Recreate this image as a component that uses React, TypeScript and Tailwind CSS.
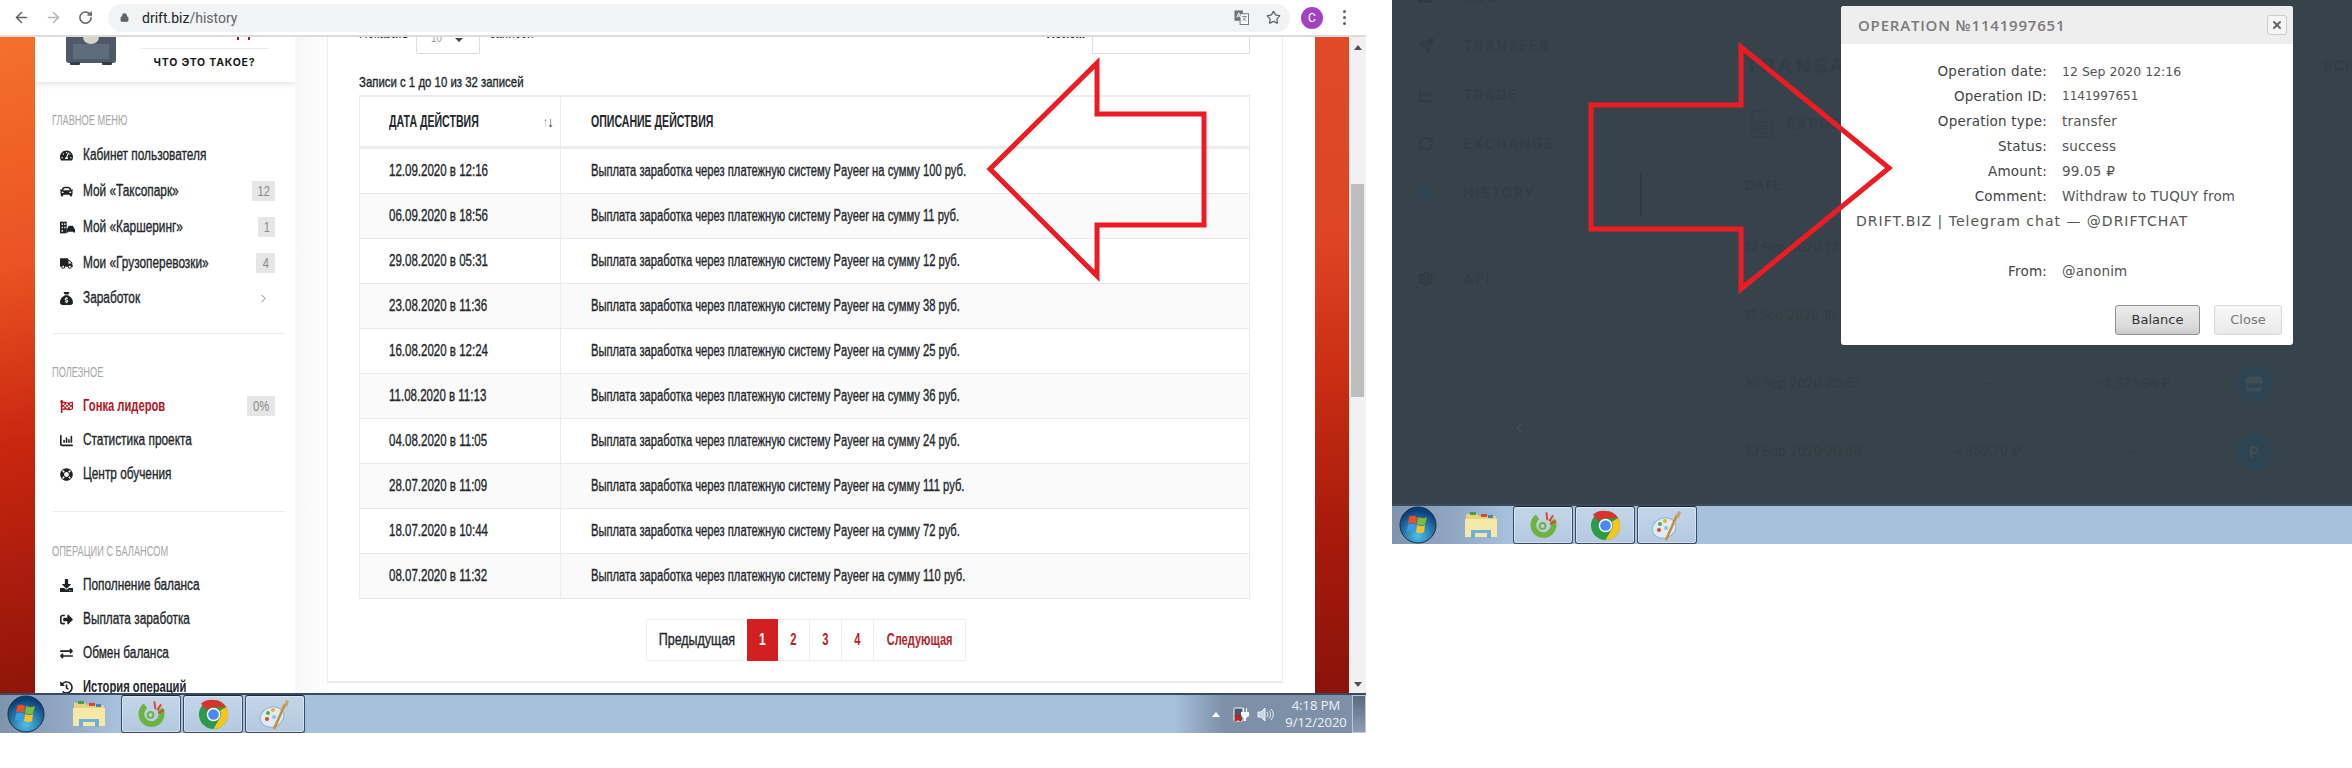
import React from "react";
import {
  ArrowLeft, ArrowRight, RotateCw, Lock, Star, ChevronRight, ChevronLeft,
  Send, LineChart, RefreshCw, Settings, X,
} from "lucide-react";
import { FaTachometerAlt, FaCar, FaTruck, FaFlagCheckered, FaLifeRing, FaDownload, FaSignOutAlt, FaExchangeAlt, FaHistory, FaClock, FaStore } from "react-icons/fa";
import { FaSackDollar, FaChartColumn } from "react-icons/fa6";

const ACT = [
  ["12.09.2020 в 12:16", "100"], ["06.09.2020 в 18:56", "11"], ["29.08.2020 в 05:31", "12"],
  ["23.08.2020 в 11:36", "38"], ["16.08.2020 в 12:24", "25"], ["11.08.2020 в 11:13", "36"],
  ["04.08.2020 в 11:05", "24"], ["28.07.2020 в 11:09", "111"], ["18.07.2020 в 10:44", "72"],
  ["08.07.2020 в 11:32", "110"],
];

const narrow = "font-['Liberation_Sans',sans-serif]";

/* Condensed text: the reference's face is narrower than any installed family. */
function N({ children, className = "" }: { children: React.ReactNode; className?: string }) {
  return <span className={`inline-block whitespace-nowrap leading-none ${className}`}>{children}</span>;
}
const thick = "[-webkit-text-stroke:0.35px_#23272b]";

function CarSharing() {
  return (
    <svg viewBox="0 0 18 14" className="w-[15px] h-[13px]" fill="#1f2328">
      <path d="M0 0h8v14H0z" />
      <path d="M2 2h1.500v2H2zM5 2h1.500v2H5zM2 6h1.500v2H2zM5 6h1.500v2H5zM2 10h1.500v2H2z" fill="#fff" />
      <path d="M9 8l1.500-3h5L17 8l1 1v4h-2v-1h-6v1H8V9z" />
    </svg>
  );
}

function MenuItem({ icon, label, badge, badgeW, bold, red, tall, chevron }: { icon: React.ReactNode; label: string; badge?: string; badgeW?: string; bold?: boolean; red?: boolean; tall?: boolean; chevron?: boolean }) {
  return (
    <div className={`flex items-center pl-[25px] pr-[20px] ${tall ? "h-[36px]" : "h-[34px]"}`}>
      <span className="w-[23px] shrink-0 flex justify-start text-[#1f2328] text-[13px]">{icon}</span>
      <N className={`${narrow} text-[16px] origin-left ${bold ? "font-bold scale-x-[0.7]" : `scale-x-[0.74] ${thick}`} ${red ? "text-[#b5161c]" : "text-[#23272b]"}`}>{label}</N>
      {badge && (
        <span className={`ml-auto h-[20px] ${badgeW} bg-[#e6e6e6] text-[#8a8a8a] flex items-center justify-center ${narrow}`}>
          <N className="text-[14px] scale-x-[0.8]">{badge}</N>
        </span>
      )}
      {chevron && <ChevronRight className="ml-auto mr-[5px] w-[13px] h-[13px] text-[#666]" strokeWidth={1.5} />}
    </div>
  );
}

function SectionLabel({ children }: { children: React.ReactNode }) {
  return (
    <div className={`${narrow} text-[#a6a6a6] pl-[17px] h-[14px] mb-[10px] flex items-center`}>
      <N className="text-[14px] origin-left scale-x-[0.66]">{children}</N>
    </div>
  );
}

function Sidebar() {
  return (
    <aside className="w-[260px] shrink-0 bg-white overflow-hidden flex flex-col">
      <div className="h-[45px] shrink-0 flex shadow-[0_2px_6px_rgba(0,0,0,0.12)] relative">
        <div className="w-[106px] flex justify-start items-start pl-[31px]">
          <svg viewBox="0 0 50 28" className="w-[50px] h-[28px]">
            <path d="M0 0h50v23a3 3 0 0 1-3 3H3a3 3 0 0 1-3-3z" fill="#4e5a68" />
            <rect x="7" y="7" width="36" height="15" fill="#5f6c7c" />
            <rect x="4" y="25" width="10" height="3" rx="1" fill="#333d49" />
            <rect x="36" y="25" width="10" height="3" rx="1" fill="#333d49" />
            <path d="M17 0h16a8 7 0 0 1-16 0z" fill="#d9d4c8" />
          </svg>
        </div>
        <div className="w-[127px] flex flex-col items-center">
          <div className="h-[3px] w-full relative"><span className="absolute left-[96px] top-0 w-[13px] h-[3px] bg-[linear-gradient(90deg,#a01a22_0_2px,transparent_2px_11px,#a01a22_11px)]" /></div>
          <div className="h-[9px] w-full border-b border-[#e8e8e8]" />
          <div className="mt-[9px] text-[10.500px] font-bold tracking-[0.8px] leading-none text-[#1a1a1a] whitespace-nowrap font-['Inter',sans-serif]">ЧТО ЭТО ТАКОЕ?</div>
        </div>
      </div>
      <div className="pt-[31px]">
        <SectionLabel>ГЛАВНОЕ МЕНЮ</SectionLabel>
        <MenuItem tall icon={<FaTachometerAlt />} label="Кабинет пользователя" />
        <MenuItem tall icon={<FaCar />} label="Мой «Таксопарк»" badge="12" badgeW="w-[23px]" />
        <MenuItem tall icon={<CarSharing />} label="Мой «Каршеринг»" badge="1" badgeW="w-[17px]" />
        <MenuItem tall icon={<FaTruck />} label="Мои «Грузоперевозки»" badge="4" badgeW="w-[19px]" />
        <MenuItem icon={<FaSackDollar />} label="Заработок" chevron />
      </div>
      <div className="ml-[17px] mt-[18px] border-t border-[#ececec] w-[233px]" />
      <div className="pt-[31px]">
        <SectionLabel>ПОЛЕЗНОЕ</SectionLabel>
        <MenuItem icon={<FaFlagCheckered className="text-[#b5161c]" />} label="Гонка лидеров" bold red badge="0%" badgeW="w-[28px]" />
        <MenuItem icon={<FaChartColumn />} label="Статистика проекта" />
        <MenuItem icon={<FaLifeRing />} label="Центр обучения" />
      </div>
      <div className="ml-[17px] mt-[20px] border-t border-[#ececec] w-[233px]" />
      <div className="pt-[32px]">
        <SectionLabel>ОПЕРАЦИИ С БАЛАНСОМ</SectionLabel>
        <MenuItem icon={<FaDownload />} label="Пополнение баланса" />
        <MenuItem icon={<FaSignOutAlt />} label="Выплата заработка" />
        <MenuItem icon={<FaExchangeAlt />} label="Обмен баланса" />
        <MenuItem icon={<FaHistory />} label="История операций" bold />
      </div>
    </aside>
  );
}

function Orb() {
  return (
    <svg viewBox="0 0 38 38" className="w-[38px] h-[38px]">
      <defs>
        <radialGradient id="orbg" cx="50%" cy="80%" r="70%"><stop offset="0" stopColor="#4fc0ea" /><stop offset="1" stopColor="#0b3f78" /></radialGradient>
      </defs>
      <circle cx="19" cy="19" r="18" fill="url(#orbg)" stroke="#1b2c44" strokeWidth="1" />
      <path d="M10 11c3-2 5-1 8 0l-1 7c-3-1-5-2-8 0z" fill="#e9502a" />
      <path d="M19 11c3 1 5 2 9 0l-2 7c-3 2-5 1-8 0z" fill="#7fbb36" />
      <path d="M9 19c3-2 5-1 8 0l-1 7c-3-1-5-2-8 0z" fill="#3a9de0" />
      <path d="M18 19c3 1 5 2 8 0l-1 7c-3 2-6 1-8 0z" fill="#f6c12c" />
    </svg>
  );
}
function Folder() {
  return (
    <svg viewBox="0 0 32 30" className="w-[32px] h-[30px]">
      <path d="M1 4h11l2 2h17v19H1z" fill="#e8d27c" />
      <rect x="5" y="2" width="6" height="3" fill="#45a049" /><rect x="16" y="4" width="6" height="3" fill="#d9482b" /><rect x="23" y="5" width="5" height="3" fill="#3a86c8" />
      <path d="M0 9h32v18H0z" fill="#f6e8a8" />
      <path d="M6 28v-8h20v8h-4v-5H10v5z" fill="#6bb1d8" />
    </svg>
  );
}
function CocCoc() {
  return (
    <svg viewBox="0 0 28 28" className="w-[27px] h-[30px]">
      <circle cx="14" cy="14" r="10.500" fill="none" stroke="#6cb33f" strokeWidth="6" strokeDasharray="48 18" transform="rotate(-30 14 14)" />
      <circle cx="13" cy="15" r="3" fill="none" stroke="#6cb33f" strokeWidth="2" />
      <path d="M17 1l1 8M24 4l-4 6M27 10l-6 3" stroke="#d9482b" strokeWidth="2" />
    </svg>
  );
}
function ChromeLogo() {
  return (
    <svg viewBox="0 0 32 32" className="w-[31px] h-[31px]">
      <circle cx="16" cy="16" r="15" fill="#2c9a47" />
      <path d="M16 1a15 15 0 0 1 13 7.500H16a7.500 7.500 0 0 0-6.500 3.700L3 4.900A15 15 0 0 1 16 1z" fill="#d9342b" />
      <path d="M29 8.500A15 15 0 0 1 16 31l6.500-11.300A7.500 7.500 0 0 0 22.500 12z" fill="#f8c51c" />
      <circle cx="16" cy="16" r="7" fill="#fff" /><circle cx="16" cy="16" r="5.500" fill="#4a89f3" />
    </svg>
  );
}
function Paint() {
  return (
    <svg viewBox="0 0 32 32" className="w-[32px] h-[32px]">
      <ellipse cx="13" cy="19" rx="12" ry="10" fill="#dfeaf4" stroke="#8fb0cc" strokeWidth="1" transform="rotate(-20 13 19)" />
      <circle cx="8" cy="21" r="2" fill="#d9482b" /><circle cx="9" cy="15" r="2" fill="#5aad3c" /><circle cx="14" cy="12" r="2" fill="#e6b52c" /><circle cx="15" cy="19" r="2" fill="#8fc0e0" />
      <path d="M15 31L26 6" stroke="#c98a3c" strokeWidth="2.500" /><path d="M25 8l2-6 3 1-2 6z" fill="#c9a06a" />
    </svg>
  );
}

function TaskBtn({ children }: { children: React.ReactNode }) {
  return (
    <div className="w-[60px] h-full flex items-center justify-center rounded-[3px] border border-[#3b4a60] border-t-[#20262f] bg-[linear-gradient(#c3d5e8,#b4c9e0)] shadow-[inset_0_0_0_1px_rgba(255,255,255,0.4)]">
      {children}
    </div>
  );
}

function Speaker() {
  return (
    <svg viewBox="0 0 17 17" className="w-[17px] h-[17px]" fill="none" stroke="#eef3f8" strokeWidth="1">
      <path d="M1 6h3l4-4v13l-4-4H1z" fill="#c9d4e0" />
      <path d="M10 6c1 1.500 1 3.500 0 5M12 4.500c2 2.500 2 5.500 0 8M14 3c3 3 3 8 0 11" />
    </svg>
  );
}

function Taskbar({ tray }: { tray?: boolean }) {
  return (
    <div className="h-[40px] shrink-0 flex items-stretch border-t-2 border-[#3a4a60] bg-[#a7c0dc] relative z-10">
      <div className="w-[116px] shrink-0 flex items-center pl-[7px] bg-[linear-gradient(90deg,#7f93ac,#93aac6_60%,#a7c0dc)]">
        <Orb />
        <span className="ml-[28px]"><Folder /></span>
      </div>
      <div className="flex gap-[2px] pl-[5px]">
        <TaskBtn><CocCoc /></TaskBtn>
        <TaskBtn><ChromeLogo /></TaskBtn>
        <TaskBtn><Paint /></TaskBtn>
      </div>
      {tray && (
        <div className="ml-auto w-[192px] flex items-center bg-[linear-gradient(90deg,#a7c0dc,#7d90a8_26%)] pl-[38px] font-['Open_Sans',sans-serif] text-[#eef3f8]">
          <span className="w-0 h-0 border-x-[4px] border-x-transparent border-b-[5px] border-b-white" />
          <svg viewBox="0 0 16 16" className="w-[16px] h-[16px] ml-[13px]">
            <rect x="1" y="2" width="9" height="13" rx="1" fill="#4a5766" stroke="#fff" />
            <path d="M8 6h8v4l-3 2v3h-2v-3L8 10zM10 2h1v4h-1zM13 2h1v4h-1z" fill="#fff" />
            <path d="M2 9l6 6M8 9l-6 6" stroke="#d81818" strokeWidth="2" />
          </svg>
          <span className="ml-[8px]"><Speaker /></span>
          <div className="ml-[10px] w-[64px] text-center text-[13px] leading-[17px] whitespace-nowrap">
            <div>4:18 PM</div>
            <div>9/12/2020</div>
          </div>
          <div className="ml-auto w-[14px] h-full border border-[#b9c7d8] bg-[linear-gradient(#5b6b7e,#8c9db2)]" />
        </div>
      )}
    </div>
  );
}

function Translate() {
  return (
    <svg viewBox="0 0 16 16" className="ml-auto w-[15px] h-[15px]">
      <rect x="0.500" y="0.500" width="9" height="11" fill="#6f7377" />
      <rect x="6.500" y="4" width="9" height="11.500" fill="#fff" stroke="#6f7377" />
      <path d="M3 8l2-5 2 5M3.700 6.500h2.600" stroke="#fff" strokeWidth="1" fill="none" />
      <path d="M8.500 7h5M11 6v1M12.500 7c-.5 2-2 3.500-3.500 4M9.800 8.500c.6 1.200 2 2.300 3.500 2.800" stroke="#6f7377" strokeWidth="0.900" fill="none" />
    </svg>
  );
}

function Chrome() {
  return (
    <div className="h-[37px] shrink-0 bg-white border-b-2 border-[#dcdcdc] flex items-center pl-[13px] pr-[20px] relative z-10 font-['Roboto',sans-serif]">
      <ArrowLeft className="w-[17px] h-[17px] text-[#5f6368]" strokeWidth={2.2} />
      <ArrowRight className="w-[17px] h-[17px] ml-[15px] text-[#b5b7ba]" strokeWidth={2.2} />
      <RotateCw className="w-[15px] h-[15px] ml-[16px] text-[#5f6368]" strokeWidth={2.4} />
      <div className="ml-[15px] h-[28px] flex-1 rounded-full bg-[#f1f3f4] flex items-center pl-[12px] pr-[9px]">
        <Lock className="w-[9px] h-[9px] text-[#5f6368] fill-[#5f6368]" strokeWidth={3} />
        <span className="ml-[13px] text-[14px] text-[#202124] leading-none">drift.biz<span className="text-[#5f6368]">/history</span></span>
        <Translate />
        <Star className="ml-[17px] w-[15px] h-[15px] text-[#5f6368]" strokeWidth={2} />
      </div>
      <div className="ml-[11px] w-[22px] h-[22px] rounded-full bg-[#a142c0] text-white text-[12px] flex items-center justify-center">C</div>
      <div className="ml-[20px] w-[3px] flex flex-col gap-[3px]">
        <span className="w-[3px] h-[3px] rounded-full bg-[#5f6368]" />
        <span className="w-[3px] h-[3px] rounded-full bg-[#5f6368]" />
        <span className="w-[3px] h-[3px] rounded-full bg-[#5f6368]" />
      </div>
    </div>
  );
}

function TableCard() {
  const top = "text-[16px] -mt-[12px] text-[#23272b] scale-x-[0.73]";
  return (
    <div className={`w-[956px] h-[646px] shrink-0 ml-[32px] bg-white border-x border-b-2 border-[#ececec] overflow-hidden ${narrow}`}>
      <div className="h-[17px] flex items-start pl-[31px] pr-[32px] relative">
        <span className="w-[51px] flex items-start"><N className={`${top} origin-left`}>Показать</N></span>
        <span className="ml-[6px] w-[64px] h-[17px] border border-t-0 border-[#ddd] rounded-b-[2px] flex items-start pl-[14px] text-[#999]">
          <N className="text-[13px] -mt-[6px] scale-x-[0.75] origin-left">10</N>
          <span className="ml-[10px] mt-[1px] w-0 h-0 border-x-[4px] border-x-transparent border-t-[4px] border-t-[#444]" />
        </span>
        <span className="ml-[10px] flex items-start"><N className={`${top} origin-left`}>записей</N></span>
        <span className="ml-auto flex items-start"><N className={`${top} origin-right font-bold`}>Поиск:</N></span>
        <span className="ml-[7px] w-[158px] h-[17px] border border-t-0 border-[#ddd]" />
      </div>
      <div className="mt-[20px] pl-[31px] text-[#23272b] h-[14px] flex items-center">
        <N className={`text-[15px] origin-left scale-x-[0.76] ${thick}`}>Записи с 1 до 10 из 32 записей</N>
      </div>
      <div className="mt-[7px] mx-[31px] w-[891px] border-x border-t-2 border-[#ececec]">
        <div className="h-[52px] border-b-[3px] border-[#ececec] flex items-center">
          <div className="w-[201px] h-full border-r border-[#ececec] pl-[29px] flex items-center text-[#23272b]">
            <N className="text-[16px] font-bold origin-left scale-x-[0.66]">ДАТА ДЕЙСТВИЯ</N>
            <span className="ml-auto mr-[8px] flex text-[14px] font-normal leading-none tracking-[-2px]">
              <span className="text-[#bbb]">↑</span><span className="text-[#444]">↓</span>
            </span>
          </div>
          <div className="pl-[30px] text-[#23272b]">
            <N className="text-[16px] font-bold origin-left scale-x-[0.66]">ОПИСАНИЕ ДЕЙСТВИЯ</N>
          </div>
        </div>
        {ACT.map(([d, s], i) => (
          <div key={d} className={`h-[45px] flex items-center border-b border-[#e8e8e8] ${i % 2 ? "bg-[#fafafa]" : "bg-white"}`}>
            <div className="w-[201px] h-full border-r border-[#ececec] pl-[29px] flex items-center text-[#23272b]">
              <N className={`text-[16px] origin-left scale-x-[0.72] ${thick}`}>{d}</N>
            </div>
            <div className="pl-[30px] text-[#23272b]">
              <N className={`text-[16px] origin-left scale-x-[0.7] ${thick}`}>Выплата заработка через платежную систему Payeer на сумму {s} руб.</N>
            </div>
          </div>
        ))}
      </div>
      <div className="mt-[20px] flex justify-center pl-[2px]">
        <div className="h-[42px] flex border border-[#ececec] rounded-[2px]">
          <span className="w-[100px] flex items-center justify-center text-[#23272b]"><N className={`text-[16px] scale-x-[0.78] ${thick}`}>Предыдущая</N></span>
          <span className="w-[31px] -my-px flex items-center justify-center bg-[#d31f21] text-white"><N className="text-[16px] font-bold scale-x-[0.75]">1</N></span>
          <span className="w-[32px] border-r border-[#ececec] flex items-center justify-center text-[#b5242a]"><N className="text-[16px] font-bold scale-x-[0.7]">2</N></span>
          <span className="w-[32px] border-r border-[#ececec] flex items-center justify-center text-[#b5242a]"><N className="text-[16px] font-bold scale-x-[0.7]">3</N></span>
          <span className="w-[32px] border-r border-[#ececec] flex items-center justify-center text-[#b5242a]"><N className="text-[16px] font-bold scale-x-[0.7]">4</N></span>
          <span className="w-[91px] flex items-center justify-center text-[#b5242a]"><N className="text-[16px] font-bold scale-x-[0.69]">Следующая</N></span>
        </div>
      </div>
    </div>
  );
}

function LeftWindow() {
  return (
    <div className="w-[1366px] h-[733px] shrink-0 flex flex-col overflow-hidden">
      <Chrome />
      <div className="flex-1 min-h-0 flex relative">
        <div className="w-[35px] shrink-0 bg-[linear-gradient(165deg,#f4702c_0%,#ea5322_35%,#c9260f_62%,#8f140a_100%)]" />
        <Sidebar />
        <div className="w-[1020px] shrink-0 bg-[linear-gradient(90deg,#f7f7f7,#fff_4%)] overflow-hidden">
          <TableCard />
        </div>
        <div className="w-[34px] shrink-0 bg-[linear-gradient(180deg,#e04a28_0%,#dd4524_30%,#cc2f14_50%,#a81a0c_75%,#8a130a_100%)]" />
        <div className="w-[17px] shrink-0 bg-[#f1f1f1] flex flex-col items-center relative">
          <span className="mt-[8px] w-0 h-0 border-x-[4px] border-x-transparent border-b-[5px] border-b-[#505050]" />
          <span className="mt-[134px] w-[13px] h-[213px] bg-[#bdbdbd]" />
          <span className="mt-auto mb-[6px] w-0 h-0 border-x-[4px] border-x-transparent border-t-[5px] border-t-[#505050]" />
        </div>
      </div>
      <Taskbar tray />
    </div>
  );
}

function DimNav({ icon, label, className }: { icon: React.ReactNode; label: string; className: string }) {
  return (
    <div className={`flex items-center ${className}`}>
      <span className="w-[45px] flex">{icon}</span>
      <span className="text-[14px] font-bold tracking-[1.500px] text-[#323e45] leading-none">{label}</span>
    </div>
  );
}

function DimRow({ date, inc, out, mark }: { date: string; inc: string; out: string; mark?: React.ReactNode }) {
  return (
    <div className="h-[68px] flex items-center text-[13px] text-[#313c43]">
      <span className="w-[172px] whitespace-nowrap">{date}</span>
      <span className="w-[140px] whitespace-nowrap text-center">{inc}</span>
      <span className="w-[150px] whitespace-nowrap text-center">{out}</span>
      <span className="ml-[29px] w-[36px] h-[36px] rounded-full bg-[#2d4453] flex items-center justify-center text-[#3f4d55] font-bold text-[16px]">{mark}</span>
    </div>
  );
}

function ModalRow({ label, value, valueClass = "text-[13.500px] tracking-[0.2px]" }: { label: string; value: string; valueClass?: string }) {
  return (
    <div className="h-[25px] flex items-center">
      <span className="w-[190px] text-right text-[#444] text-[13.500px] tracking-[0.2px] whitespace-nowrap">{label}</span>
      <span className={`ml-[15px] text-[#555] whitespace-nowrap ${valueClass}`}>{value}</span>
    </div>
  );
}

function Modal() {
  return (
    <div className="absolute left-[449px] top-[6px] w-[452px] h-[339px] bg-white rounded-[3px] overflow-hidden flex flex-col font-['DejaVu_Sans',sans-serif]">
      <div className="h-[38px] shrink-0 bg-[#eeeeee] flex items-center pl-[17px] pr-[6px]">
        <span className="text-[15px] font-semibold tracking-[0.8px] text-[#7a7a7a] font-['Open_Sans',sans-serif]">OPERATION №1141997651</span>
        <span className="ml-auto w-[20px] h-[20px] rounded-[3px] border border-[#ccc] bg-[#f5f5f5] flex items-center justify-center">
          <X className="w-[12px] h-[12px] text-[#666]" strokeWidth={4} />
        </span>
      </div>
      <div className="pt-[15px] pl-[16px] leading-[25px]">
        <ModalRow label="Operation date:" value="12 Sep 2020 12:16" valueClass="text-[12.500px]" />
        <ModalRow label="Operation ID:" value="1141997651" valueClass="text-[12px]" />
        <ModalRow label="Operation type:" value="transfer" />
        <ModalRow label="Status:" value="success" />
        <ModalRow label="Amount:" value="99.05 ₽" />
        <ModalRow label="Comment:" value="Withdraw to TUQUY from" />
        <div className="h-[25px] -ml-px text-[#555] whitespace-nowrap text-[14px] tracking-[1px]">DRIFT.BIZ | Telegram chat — @DRIFTCHAT</div>
        <div className="h-[25px]" />
        <ModalRow label="From:" value="@anonim" />
      </div>
      <div className="mt-auto mb-[10px] flex justify-end gap-[14px] pr-[11px] text-[13px]">
        <span className="w-[85px] h-[30px] rounded-[3px] border border-[#8f8f8f] bg-[linear-gradient(#ececec,#dcdcdc_70%,#c9c9c9)] text-[#333] flex items-center justify-center">Balance</span>
        <span className="w-[68px] h-[30px] rounded-[3px] border border-[#d8d8d8] bg-[linear-gradient(#f8f8f8,#eaeaea)] text-[#777] flex items-center justify-center">Close</span>
      </div>
    </div>
  );
}

function RightWindow() {
  const dimIc = "w-[16px] h-[16px] text-[#2f3a41]";
  return (
    <div className="w-[960px] h-[544px] shrink-0 ml-[26px] flex flex-col overflow-hidden font-['Inter',sans-serif]">
      <div className="flex-1 min-h-0 bg-[#37434a] flex relative overflow-hidden">
        <div className="w-[248px] shrink-0 pl-[26px] flex flex-col relative">
          <DimNav className="-mt-[13px] h-[20px]" icon={<span className="w-[15px] h-[12px] bg-[#303b42]" />} label="HUB" />
          <DimNav className="mt-[29px] h-[20px]" icon={<Send className={dimIc} strokeWidth={2.5} />} label="TRANSFER" />
          <DimNav className="mt-[29px] h-[20px]" icon={<LineChart className={dimIc} />} label="TRADE" />
          <DimNav className="mt-[29px] h-[20px]" icon={<RefreshCw className={dimIc} />} label="EXCHANGE" />
          <DimNav className="mt-[29px] h-[20px]" icon={<FaClock className="w-[15px] h-[15px] text-[#2d4453]" />} label="HISTORY" />
          <DimNav className="mt-[66px] h-[20px]" icon={<Settings className={dimIc} strokeWidth={3} />} label="API" />
          <ChevronLeft className="mt-[126px] ml-[93px] w-[16px] h-[26px] text-[#4c5860]" strokeWidth={1.2} />
        </div>
        <div className="absolute left-[248px] top-[172px] w-[2px] h-[44px] bg-[#2e3940]" />
        <div className="flex-1 min-w-0 pl-[105px] text-[#323e45]">
          <div className="mt-[55px] h-[22px] leading-[22px] whitespace-nowrap flex">
            <span className="w-[578px] shrink-0 text-[20px] font-bold tracking-[3px]">TRANSACTIONS</span>
            <span className="text-[14px] font-bold tracking-[1px]">BCH</span>
          </div>
          <div className="mt-[33px] ml-[6px] flex items-center">
            <svg viewBox="0 0 22 28" className="w-[22px] h-[28px]" fill="none" stroke="#323e45"><path d="M1 1h14l6 6v20H1z" /><path d="M5 12h12v11H5zM5 15.500h12M5 19h12M9 12v11M13 12v11" /></svg>
            <span className="ml-[14px] text-[14px] font-bold tracking-[1.500px] border-b border-dotted border-[#323e45]">EXPORT</span>
          </div>
          <div className="mt-[41px] text-[13px] font-bold tracking-[0.5px] leading-none">DATE</div>
          <div className="mt-[22px]">
            <DimRow date="12 Sep 2020 12:16" inc="" out="" />
            <DimRow date="11 Sep 2020 10:15" inc="" out="" />
            <DimRow date="10 Sep 2020 20:57" inc="–" out="– 2,573.98 ₽" mark={<FaStore className="w-[18px] h-[18px]" />} />
            <DimRow date="10 Sep 2020 20:56" inc="+ 352.79 ₽" out="–" mark="P" />
            <DimRow date="" inc="" out="" />
          </div>
        </div>
        <Modal />
        <svg viewBox="0 0 960 504" className="absolute inset-0 w-[960px] h-[504px] pointer-events-none">
          <path d="M199 105H349V47L497 168L349 289V229H199Z" fill="none" stroke="#ed1c24" strokeWidth="5" />
        </svg>
      </div>
      <Taskbar />
    </div>
  );
}

export default function App() {
  return (
    <div className="w-[2352px] h-[768px] bg-white flex items-start overflow-hidden relative">
      <LeftWindow />
      <RightWindow />
      <svg viewBox="0 0 2352 768" className="absolute inset-0 w-[2352px] h-[768px] pointer-events-none">
        <path d="M990 169L1097 63V114H1204V225H1097V276Z" fill="none" stroke="#ed1c24" strokeWidth="5" />
      </svg>
    </div>
  );
}
